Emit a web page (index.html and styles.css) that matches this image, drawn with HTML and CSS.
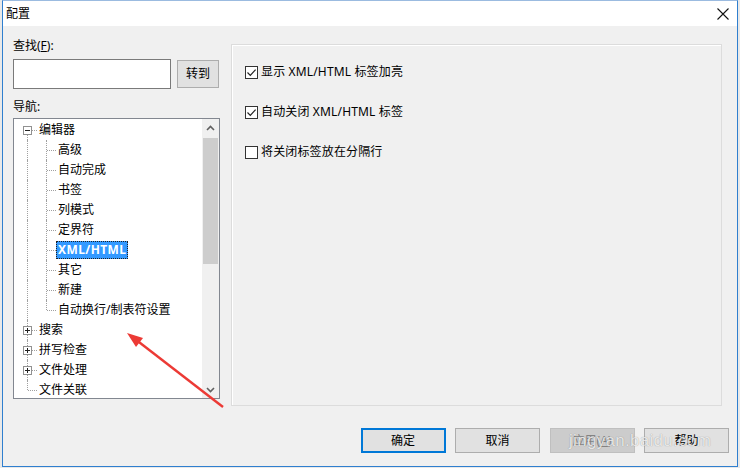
FILE: index.html
```html
<!doctype html>
<html>
<head>
<meta charset="utf-8">
<title>配置</title>
<link rel="stylesheet" href="styles.css">
</head>
<body>
<div class="window">
	<div class="titlebar">
		<span class="title">配置</span>
		<span class="close"><svg width="12" height="12" viewBox="0 0 12 12"><path d="M0.5 0.5L11.5 11.5M11.5 0.5L0.5 11.5" stroke="#111" stroke-width="1.1" fill="none"/></svg></span>
	</div>
	<div class="client">
		<div class="main">
			<div class="nav">
				<div class="lbl">查找(<u>F</u>):</div>
				<div class="find">
					<div class="findbox"></div>
					<div class="btn go">转到</div>
				</div>
				<div class="lbl nav-lbl">导航:</div>
				<div class="tree">
					<div class="tree-list">
						<div class="row"><span class="cell first"><svg width="9" height="9"><rect x=".5" y=".5" width="8" height="8" fill="#fff" stroke="#919191"/><path d="M2 4.5h5" stroke="#222"/></svg></span><span class="txt">编辑器</span></div>
						<div class="row"><span class="cell pipe"></span><span class="cell"></span><span class="txt">高级</span></div>
						<div class="row"><span class="cell pipe"></span><span class="cell"></span><span class="txt">自动完成</span></div>
						<div class="row"><span class="cell pipe"></span><span class="cell"></span><span class="txt">书签</span></div>
						<div class="row"><span class="cell pipe"></span><span class="cell"></span><span class="txt">列模式</span></div>
						<div class="row"><span class="cell pipe"></span><span class="cell"></span><span class="txt">定界符</span></div>
						<div class="row"><span class="cell pipe"></span><span class="cell"></span><span class="txt sel">XML/HTML</span></div>
						<div class="row"><span class="cell pipe"></span><span class="cell"></span><span class="txt">其它</span></div>
						<div class="row"><span class="cell pipe"></span><span class="cell"></span><span class="txt">新建</span></div>
						<div class="row"><span class="cell pipe"></span><span class="cell last"></span><span class="txt">自动换行/制表符设置</span></div>
						<div class="row"><span class="cell"><svg width="9" height="9"><rect x=".5" y=".5" width="8" height="8" fill="#fff" stroke="#919191"/><path d="M2 4.5h5M4.5 2v5" stroke="#222"/></svg></span><span class="txt">搜索</span></div>
						<div class="row"><span class="cell"><svg width="9" height="9"><rect x=".5" y=".5" width="8" height="8" fill="#fff" stroke="#919191"/><path d="M2 4.5h5M4.5 2v5" stroke="#222"/></svg></span><span class="txt">拼写检查</span></div>
						<div class="row"><span class="cell"><svg width="9" height="9"><rect x=".5" y=".5" width="8" height="8" fill="#fff" stroke="#919191"/><path d="M2 4.5h5M4.5 2v5" stroke="#222"/></svg></span><span class="txt">文件处理</span></div>
						<div class="row"><span class="cell last"></span><span class="txt">文件关联</span></div>
					</div>
					<div class="vscroll">
						<div class="arrow"><svg width="9" height="6"><path d="M1 5L4.5 1.5L8 5" stroke="#606060" stroke-width="1.6" fill="none"/></svg></div>
						<div class="track"><div class="thumb"></div></div>
						<div class="arrow"><svg width="9" height="6"><path d="M1 1L4.5 4.5L8 1" stroke="#606060" stroke-width="1.6" fill="none"/></svg></div>
					</div>
				</div>
			</div>
			<div class="panel">
				<div class="chk"><span class="box"><svg width="11" height="11"><path d="M1.5 5.5L4.3 8.3L9.6 2.6" stroke="#222" stroke-width="1.2" fill="none"/></svg></span>显示 XML/HTML 标签加亮</div>
				<div class="chk"><span class="box"><svg width="11" height="11"><path d="M1.5 5.5L4.3 8.3L9.6 2.6" stroke="#222" stroke-width="1.2" fill="none"/></svg></span>自动关闭 XML/HTML 标签</div>
				<div class="chk"><span class="box"></span>将关闭标签放在分隔行</div>
			</div>
		</div>
		<div class="buttons">
			<div class="btn default">确定</div>
			<div class="btn">取消</div>
			<div class="btn disabled">应用(<u>A</u>)</div>
			<div class="btn">帮助</div>
		</div>
	</div>
</div>
<!-- 标注箭头 -->
<svg class="annot" width="740" height="468" viewBox="0 0 740 468">
	<path d="M223 407L135 339" stroke="#ec3a35" stroke-width="2.4" fill="none"/>
	<polygon points="127,333 143,338 136,347" fill="#ec3a35"/>
</svg>
<div class="watermark">jingyan.baidu.com</div>
</body>
</html>
```
FILE: styles.css
```css
*{margin:0;padding:0;box-sizing:border-box;}
body{width:740px;height:468px;background:#e9e9e9;font-size:12px;line-height:16px;color:#000;
	font-family:"Noto Sans","Noto Sans CJK SC",sans-serif;overflow:hidden;position:relative;}
u{text-decoration:underline;}

.window{margin-left:2px;width:736px;height:467px;border:1px solid #2f7fcf;border-top-color:#9bbbe0;
	background:#f0f0f0;display:flex;flex-direction:column;}
.titlebar{height:25px;background:#fff;display:flex;align-items:center;justify-content:space-between;
	padding:0 8px 0 3px;}
.titlebar .close{width:12px;height:12px;display:flex;}

.client{flex:1;padding:12px 8px 0 10px;display:flex;flex-direction:column;}
.main{display:grid;grid-template-columns:207px 491px;column-gap:11px;}

.lbl{height:16px;}
.find{display:flex;align-items:flex-start;gap:6px;margin-top:5px;}
.findbox{width:158px;height:30px;background:#fff;border:1px solid #7a7a7a;}
.btn{height:25px;width:85px;background:#e1e1e1;border:1px solid #adadad;display:flex;
	align-items:center;justify-content:center;}
.btn.go{width:42px;height:28px;margin-top:1px;}
.nav-lbl{margin-top:10px;}

.tree{margin-top:3px;width:207px;height:281px;border:1px solid #828790;background:#fff;display:flex;overflow:hidden;}
.tree-list{flex:1;padding:1px 0 0 4px;}
.row{height:20px;display:flex;align-items:center;white-space:nowrap;}
.cell{width:19px;height:20px;position:relative;flex:none;display:flex;align-items:center;justify-content:center;}
.cell::before{content:"";position:absolute;left:9px;top:0;bottom:0;border-left:1px dotted #a0a0a0;}
.cell::after{content:"";position:absolute;left:10px;right:0;top:10px;border-top:1px dotted #a0a0a0;}
.cell.first::before{top:10px;}
.cell.last::before{bottom:10px;}
.cell.pipe::after{display:none;}
.cell svg{position:relative;z-index:1;}
.txt{padding:0 2px;height:18px;line-height:18px;}
.txt.sel{background:#3399ff;color:#fff;font-weight:bold;letter-spacing:0.4px;
	outline:1px dotted #222;outline-offset:-1px;}

.vscroll{width:17px;background:#f0f0f0;display:flex;flex-direction:column;}
.arrow{height:17px;display:flex;align-items:center;justify-content:center;}
.track{flex:1;padding:2px 1px 0 1px;}
.thumb{height:126px;background:#cdcdcd;}

.panel{margin-top:6px;height:362px;border:1px solid #dcdcdc;box-shadow:inset 1px 1px 0 #fff;
	padding:19px 0 0 13px;display:flex;flex-direction:column;gap:24px;}
.chk{display:flex;align-items:center;height:16px;gap:3px;letter-spacing:0.15px;}
.chk .box{width:13px;height:13px;border:1px solid #333;background:#fff;display:flex;align-items:center;justify-content:center;}

.buttons{margin-top:22px;display:flex;justify-content:flex-end;gap:9.5px;}
.btn.default{border:2px solid #0078d7;}
.btn.disabled{background:#cccccc;border-color:#bfbfbf;color:#838383;}

.annot{position:absolute;left:0;top:0;pointer-events:none;}
.watermark{position:absolute;left:569px;top:431px;font-family:"Liberation Sans",sans-serif;font-size:17px;
	line-height:20px;color:rgba(255,255,255,0.8);text-shadow:0 0 1px rgba(0,0,0,0.4);letter-spacing:0.3px;}
```
